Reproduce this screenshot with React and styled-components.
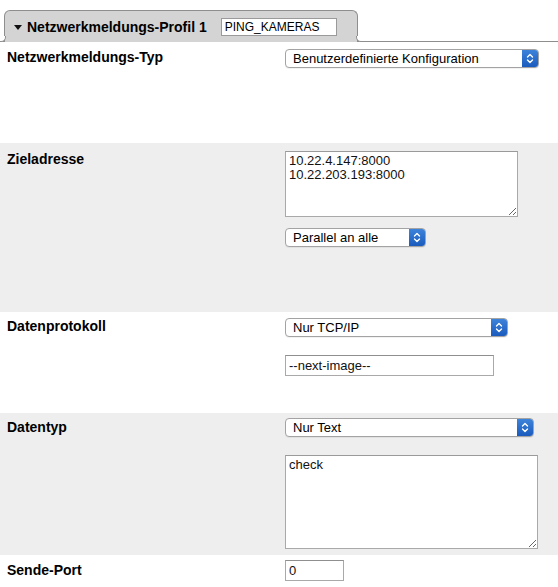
import React from "react";
import styled, { createGlobalStyle } from "styled-components";

const GlobalStyle = createGlobalStyle`
  html, body {
    margin: 0;
    padding: 0;
    background: #ffffff;
  }
  body {
    font-family: "Liberation Sans", Arial, Helvetica, sans-serif;
    color: #000;
  }
`;

// HEADER / TAB
const Page = styled.div`
  width: 558px;
  display: flex;
  flex-direction: column;
`;

const TabBar = styled.div`
  display: flex;
  align-items: flex-end;
  height: 42px;
  padding-left: 4px;
  box-sizing: border-box;
  border-bottom: 1px solid #8e8e8e;
`;

const Tab = styled.div`
  position: relative;
  display: flex;
  align-items: center;
  gap: 14px;
  width: 354px;
  height: 32px;
  box-sizing: border-box;
  padding: 0 8px;
  margin-bottom: -1px;
  background: #d4d4d4;
  border: 1px solid #8e8e8e;
  border-bottom: none;
  border-radius: 6px 6px 0 0;
  &::before,
  &::after {
    content: "";
    position: absolute;
    bottom: 0;
    width: 5px;
    height: 5px;
    border-bottom: 1px solid #8e8e8e;
  }
  &::before {
    left: -5px;
    border-right: 1px solid #8e8e8e;
    border-bottom-right-radius: 5px;
    background: #fff;
  }
  &::after {
    right: -5px;
    border-left: 1px solid #8e8e8e;
    border-bottom-left-radius: 5px;
    background: #fff;
  }
`;

const TabTitle = styled.span`
  display: flex;
  align-items: center;
  gap: 4px;
  font-size: 14px;
  font-weight: bold;
`;

const TabInput = styled.input`
  width: 116px;
  height: 18px;
  box-sizing: border-box;
  border: 1px solid #9a9a9a;
  background: #fff;
  font-family: "Liberation Sans", Arial, sans-serif;
  font-size: 12px;
  padding: 0 3px;
  outline: none;
`;

// FORM ROWS
const Row = styled.div`
  display: flex;
  height: ${props => props.height}px;
  box-sizing: border-box;
  padding-top: ${props => props.pad}px;
  background: ${props => (props.shaded ? "#eeeeee" : "#ffffff")};
`;

const Label = styled.div`
  width: 285px;
  padding-left: 7px;
  padding-top: ${props => props.offset || 0}px;
  box-sizing: border-box;
  font-size: 14px;
  font-weight: bold;
  line-height: 16px;
`;

const Controls = styled.div`
  display: flex;
  flex-direction: column;
  align-items: flex-start;
  gap: ${props => props.gap || 0}px;
`;

const SelectBox = styled.div`
  display: flex;
  align-items: stretch;
  width: ${props => props.width}px;
  height: 19px;
  box-sizing: border-box;
  border: 1px solid #a3a3a3;
  border-radius: 4px;
  background: #fff;
  overflow: hidden;
  box-shadow: 0 1px 0 rgba(0, 0, 0, 0.05);
`;

const SelectText = styled.span`
  flex: 1;
  padding-left: 7px;
  font-size: 13px;
  line-height: 17px;
  white-space: nowrap;
`;

const SelectArrow = styled.span`
  display: flex;
  align-items: center;
  justify-content: center;
  width: 16px;
  background: linear-gradient(#3d83da, #1a5bbd);
`;

const TextArea = styled.textarea`
  width: ${props => props.width}px;
  height: ${props => props.height}px;
  box-sizing: border-box;
  margin: 0;
  border: 1px solid #a9a9a9;
  border-top-color: #9a9a9a;
  padding: 2px 3px;
  font-family: "Liberation Sans", Arial, sans-serif;
  font-size: 13px;
  line-height: 14px;
  color: #111;
  background: #fff;
  outline: none;
`;

const TextInput = styled.input`
  width: ${props => props.width}px;
  height: 21px;
  box-sizing: border-box;
  margin: 0;
  border: 1px solid #a9a9a9;
  border-top-color: #8f8f8f;
  padding: 0 3px;
  font-family: "Liberation Sans", Arial, sans-serif;
  font-size: 13px;
  color: #111;
  background: #fff;
  outline: none;
`;

const Chevrons = () => (
  <svg width="8" height="11" viewBox="0 0 8 11">
    <path
      d="M1.5 4 L4 1.5 L6.5 4 M1.5 7 L4 9.5 L6.5 7"
      fill="none"
      stroke="#fff"
      strokeWidth="1.4"
      strokeLinecap="round"
      strokeLinejoin="round"
    />
  </svg>
);

const TriangleDown = () => (
  <svg width="10" height="8" viewBox="0 0 10 8">
    <path d="M1 2 L9 2 L5 7 Z" fill="#111" />
  </svg>
);

const Select = ({ width, children }) => (
  <SelectBox width={width}>
    <SelectText>{children}</SelectText>
    <SelectArrow>
      <Chevrons />
    </SelectArrow>
  </SelectBox>
);

const App = () => {
  return (
    <Page>
      <GlobalStyle />
      <TabBar>
        <Tab>
          <TabTitle>
            <TriangleDown />
            Netzwerkmeldungs-Profil 1
          </TabTitle>
          <TabInput readOnly value="PING_KAMERAS" />
        </Tab>
      </TabBar>

      <Row height={101} pad={7}>
        <Label offset={0}>Netzwerkmeldungs-Typ</Label>
        <Controls>
          <Select width={254}>Benutzerdefinierte Konfiguration</Select>
        </Controls>
      </Row>

      <Row height={169} pad={8} shaded>
        <Label offset={0}>Zieladresse</Label>
        <Controls gap={11}>
          <TextArea
            width={233}
            height={66}
            readOnly
            value={"10.22.4.147:8000\n10.22.203.193:8000"}
          />
          <Select width={141}>Parallel an alle</Select>
        </Controls>
      </Row>

      <Row height={101} pad={6}>
        <Label offset={0}>Datenprotokoll</Label>
        <Controls gap={18}>
          <Select width={223}>Nur TCP/IP</Select>
          <TextInput width={209} readOnly value="--next-image--" />
        </Controls>
      </Row>

      <Row height={142} pad={5} shaded>
        <Label offset={1}>Datentyp</Label>
        <Controls gap={18}>
          <Select width={249}>Nur Text</Select>
          <TextArea width={253} height={94} readOnly value="check" />
        </Controls>
      </Row>

      <Row height={32} pad={5}>
        <Label offset={2}>Sende-Port</Label>
        <Controls>
          <TextInput width={59} readOnly value="0" />
        </Controls>
      </Row>
    </Page>
  );
};

export default App;
